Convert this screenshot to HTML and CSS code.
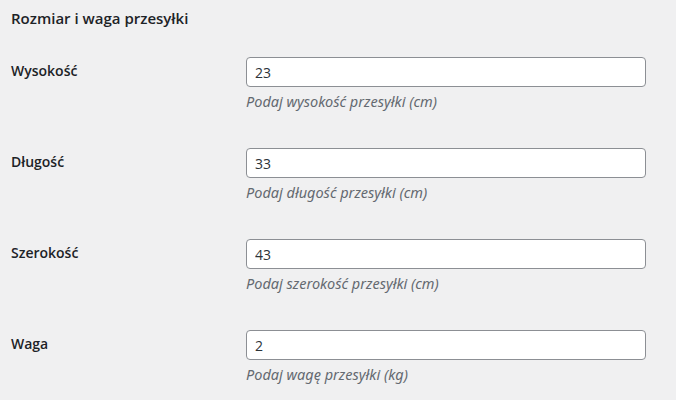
FILE: index.html
```html
<!DOCTYPE html>
<html lang="pl">
<head>
    <meta charset="UTF-8">
    <title>Rozmiar i waga przesyłki</title>
    <link rel="stylesheet" href="styles.css">
</head>
<body>
    <h2 class="section-title">Rozmiar i waga przesyłki</h2>

    <div class="form-table">
        <div class="form-row">
            <label class="form-label" for="height">Wysokość</label>
            <div class="form-field">
                <input type="text" id="height" class="regular-text" value="23">
                <p class="description">Podaj wysokość przesyłki (cm)</p>
            </div>
        </div>
        <div class="form-row">
            <label class="form-label" for="length">Długość</label>
            <div class="form-field">
                <input type="text" id="length" class="regular-text" value="33">
                <p class="description">Podaj długość przesyłki (cm)</p>
            </div>
        </div>
        <div class="form-row">
            <label class="form-label" for="width">Szerokość</label>
            <div class="form-field">
                <input type="text" id="width" class="regular-text" value="43">
                <p class="description">Podaj szerokość przesyłki (cm)</p>
            </div>
        </div>
        <div class="form-row">
            <label class="form-label" for="weight">Waga</label>
            <div class="form-field">
                <input type="text" id="weight" class="regular-text" value="2">
                <p class="description">Podaj wagę przesyłki (kg)</p>
            </div>
        </div>
    </div>
</body>
</html>
```

FILE: styles.css
```css
body {
    font-family: "Open Sans", "Noto Sans", sans-serif;
    background-color: #f0f0f1;
    color: #1d2327;
    margin: 0;
    padding: 0 11px;
    font-size: 13px;
}

.section-title {
    font-size: 15px;
    font-weight: 600;
    margin: 0;
    padding-top: 7px;
    line-height: 22px;
}

.form-table {
    margin-top: 13px;
}

.form-row {
    display: flex;
    padding: 15px 0 22px;
}

.form-label {
    width: 235px;
    flex-shrink: 0;
    font-size: 14px;
    font-weight: 600;
    line-height: 20px;
    padding-top: 4px;
}

.form-field {
    width: 400px;
}

.regular-text {
    box-sizing: border-box;
    width: 400px;
    height: 30px;
    margin: 0;
    padding: 0 8px;
    border: 1px solid #8c8f94;
    border-radius: 4px;
    background-color: #fff;
    color: #2c3338;
    font-family: inherit;
    font-size: 14px;
}

.description {
    margin: 4px 0 0;
    line-height: 20px;
    font-family: "Noto Sans", sans-serif;
    font-size: 14.5px;
    font-style: italic;
    color: #646970;
}
```
